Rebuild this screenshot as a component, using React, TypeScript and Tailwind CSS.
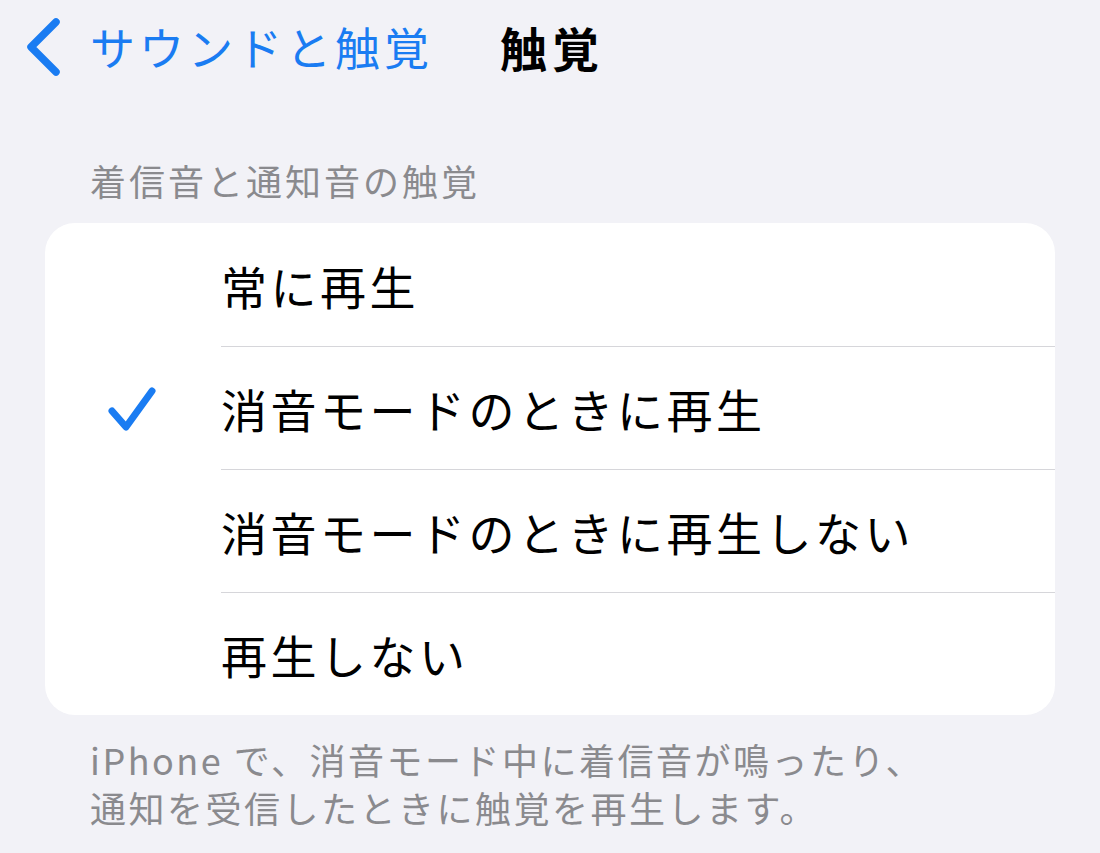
const font = "font-['Noto_Sans_CJK_JP','Noto_Sans',sans-serif]";

const options = [
  "常に再生",
  "消音モードのときに再生",
  "消音モードのときに再生しない",
  "再生しない",
];

function Chevron() {
  return (
    <svg width="40" height="60" viewBox="0 0 40 60" className="shrink-0">
      <path
        d="M31 6 L6 31 L31 56"
        fill="none"
        stroke="#1a7cf2"
        strokeWidth="7.5"
        strokeLinecap="round"
        strokeLinejoin="round"
      />
    </svg>
  );
}

function Check() {
  return (
    <svg width="56" height="50" viewBox="0 0 56 50">
      <path
        d="M8 28 L22 44 L48 8"
        fill="none"
        stroke="#1a7cf2"
        strokeWidth="7"
        strokeLinecap="round"
        strokeLinejoin="round"
      />
    </svg>
  );
}

export default function App() {
  const selected = 1;

  return (
    <div className={`w-[1100px] h-[853px] overflow-hidden bg-[#f2f2f7] ${font}`}>
      {/* nav bar */}
      <div className="h-[92px] flex items-center pl-[25px]">
        <Chevron />
        <span className="ml-[25px] text-[45px] leading-none text-[#1a7cf2] tracking-[4px]">
          サウンドと触覚
        </span>
        <span className="ml-[67px] text-[47px] leading-none font-bold text-black tracking-[5px]">
          触覚
        </span>
      </div>

      <div className="pt-[70px] pl-[90px] text-[36px] leading-none text-[#8a8a8e] tracking-[3px]">
        着信音と通知音の触覚
      </div>

      <div className="mx-[45px] mt-[25px] bg-white rounded-[30px] overflow-hidden">
        {options.map((label, i) => (
          <div key={label} className="flex h-[123px]">
            <div className="w-[176px] shrink-0 flex items-center pl-[59px]">
              {i === selected && <Check />}
            </div>
            <div
              className={`flex-1 flex items-center ${
                i > 0 ? "border-t-[1.5px] border-[#d6d6da]" : ""
              }`}
            >
              <span className="text-[46px] leading-none text-black tracking-[3.5px]">
                {label}
              </span>
            </div>
          </div>
        ))}
      </div>

      <div className="pl-[90px] pt-[20px] text-[36px] leading-[48px] text-[#8a8a8e] tracking-[2.5px]">
        <div>iPhone で、消音モード中に着信音が鳴ったり、</div>
        <div>通知を受信したときに触覚を再生します。</div>
      </div>
    </div>
  );
}
